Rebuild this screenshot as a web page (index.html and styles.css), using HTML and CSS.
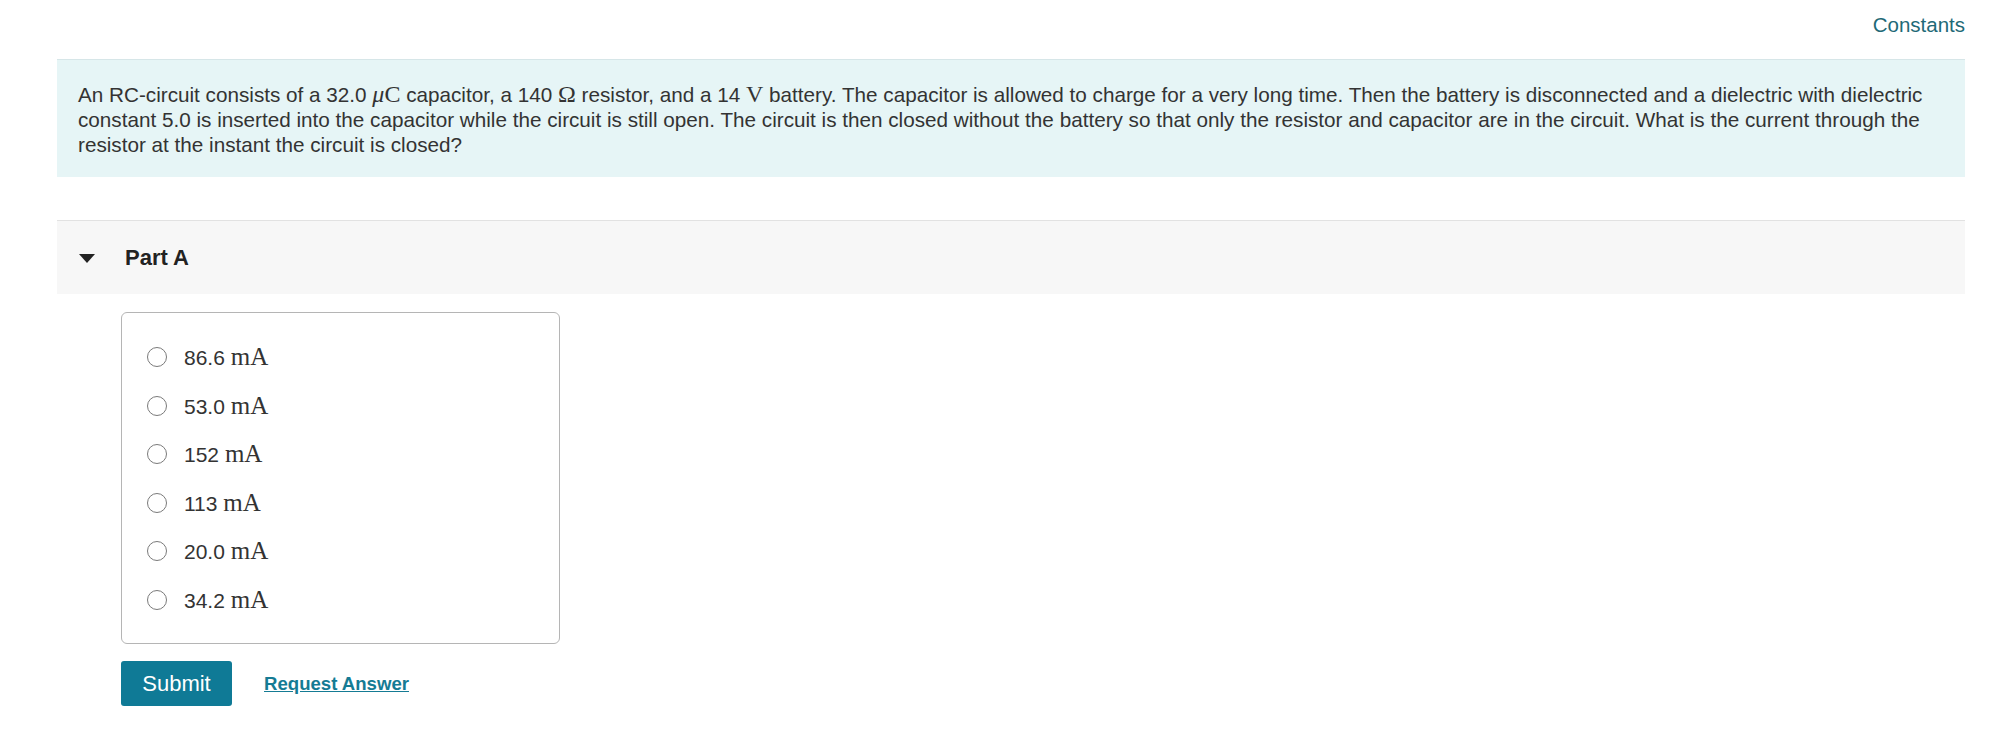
FILE: index.html
```html
<!DOCTYPE html>
<html>
<head>
<meta charset="utf-8">
<link rel="stylesheet" href="styles.css">
</head>
<body>
<div class="page">
  <div class="topbar"><a class="constants">Constants</a></div>
  <div class="problem">
    An RC-circuit consists of a 32.0 <span class="m"><i>μ</i>C</span> capacitor, a 140 <span class="m">Ω</span> resistor, and a 14 <span class="m">V</span> battery. The capacitor is allowed to charge for a very long time. Then the battery is disconnected and a dielectric with dielectric constant 5.0 is inserted into the capacitor while the circuit is still open. The circuit is then closed without the battery so that only the resistor and capacitor are in the circuit. What is the current through the resistor at the instant the circuit is closed?
  </div>
  <div class="part">
    <svg class="caret" width="16" height="9" viewBox="0 0 16 9"><path d="M0 0 L16 0 L8 9 Z" fill="#222"/></svg>
    <span class="part-title">Part A</span>
  </div>
  <div class="answers">
    <div class="opt"><span class="radio"></span><span class="val">86.6 <span class="u">mA</span></span></div>
    <div class="opt"><span class="radio"></span><span class="val">53.0 <span class="u">mA</span></span></div>
    <div class="opt"><span class="radio"></span><span class="val">152 <span class="u">mA</span></span></div>
    <div class="opt"><span class="radio"></span><span class="val">113 <span class="u">mA</span></span></div>
    <div class="opt"><span class="radio"></span><span class="val">20.0 <span class="u">mA</span></span></div>
    <div class="opt"><span class="radio"></span><span class="val">34.2 <span class="u">mA</span></span></div>
  </div>
  <div class="actions">
    <button class="submit">Submit</button>
    <a class="request">Request Answer</a>
  </div>
</div>
</body>
</html>
```

FILE: styles.css
```css
html, body {
  margin: 0;
  padding: 0;
  background: #ffffff;
}
body {
  font-family: "Liberation Sans", Arial, sans-serif;
  color: #333333;
}
.page {
  padding: 0 36px 0 57px;
}
.topbar {
  height: 59px;
  display: flex;
  justify-content: flex-end;
  align-items: flex-start;
}
.constants {
  font-size: 20.5px;
  line-height: 23px;
  margin-top: 13px;
  color: #1f6a77;
}
.problem {
  background: #e6f5f6;
  border-top: 1px solid #d6e6e8;
  padding: 22px 16px 20px 21px;
  font-size: 20.7px;
  line-height: 25px;
  color: #333333;
}
.m {
  font-family: "Liberation Serif", "Times New Roman", serif;
  font-size: 24px;
  line-height: 0;
}
.part {
  margin-top: 43px;
  background: #f7f7f7;
  border-top: 1px solid #e2e2e2;
  height: 73px;
  display: flex;
  align-items: center;
}
.caret {
  margin-left: 22px;
  margin-top: 2px;
}
.part-title {
  margin-left: 30px;
  font-size: 22px;
  font-weight: bold;
  color: #222222;
}
.answers {
  margin: 18px 0 0 64px;
  width: 437px;
  border: 1px solid #b5b5b5;
  border-radius: 6px;
  padding: 20px 0 19px;
}
.opt {
  height: 48.5px;
  display: flex;
  align-items: center;
}
.radio {
  width: 18px;
  height: 18px;
  border: 1px solid #7a7a7a;
  border-radius: 50%;
  margin-left: 25px;
  background: #fff;
}
.val {
  margin-left: 17px;
  font-size: 21px;
  color: #333333;
}
.u {
  font-family: "Liberation Serif", "Times New Roman", serif;
  font-size: 25px;
}
.actions {
  margin: 17px 0 0 64px;
  display: flex;
  align-items: center;
}
.submit {
  width: 111px;
  height: 45px;
  background: #0f7a96;
  color: #ffffff;
  border: none;
  border-radius: 3px;
  font-family: "Liberation Sans", Arial, sans-serif;
  font-size: 22px;
  padding: 0;
}
.request {
  margin-left: 32px;
  font-size: 18.6px;
  font-weight: bold;
  color: #157b94;
  text-decoration: underline;
}
```
